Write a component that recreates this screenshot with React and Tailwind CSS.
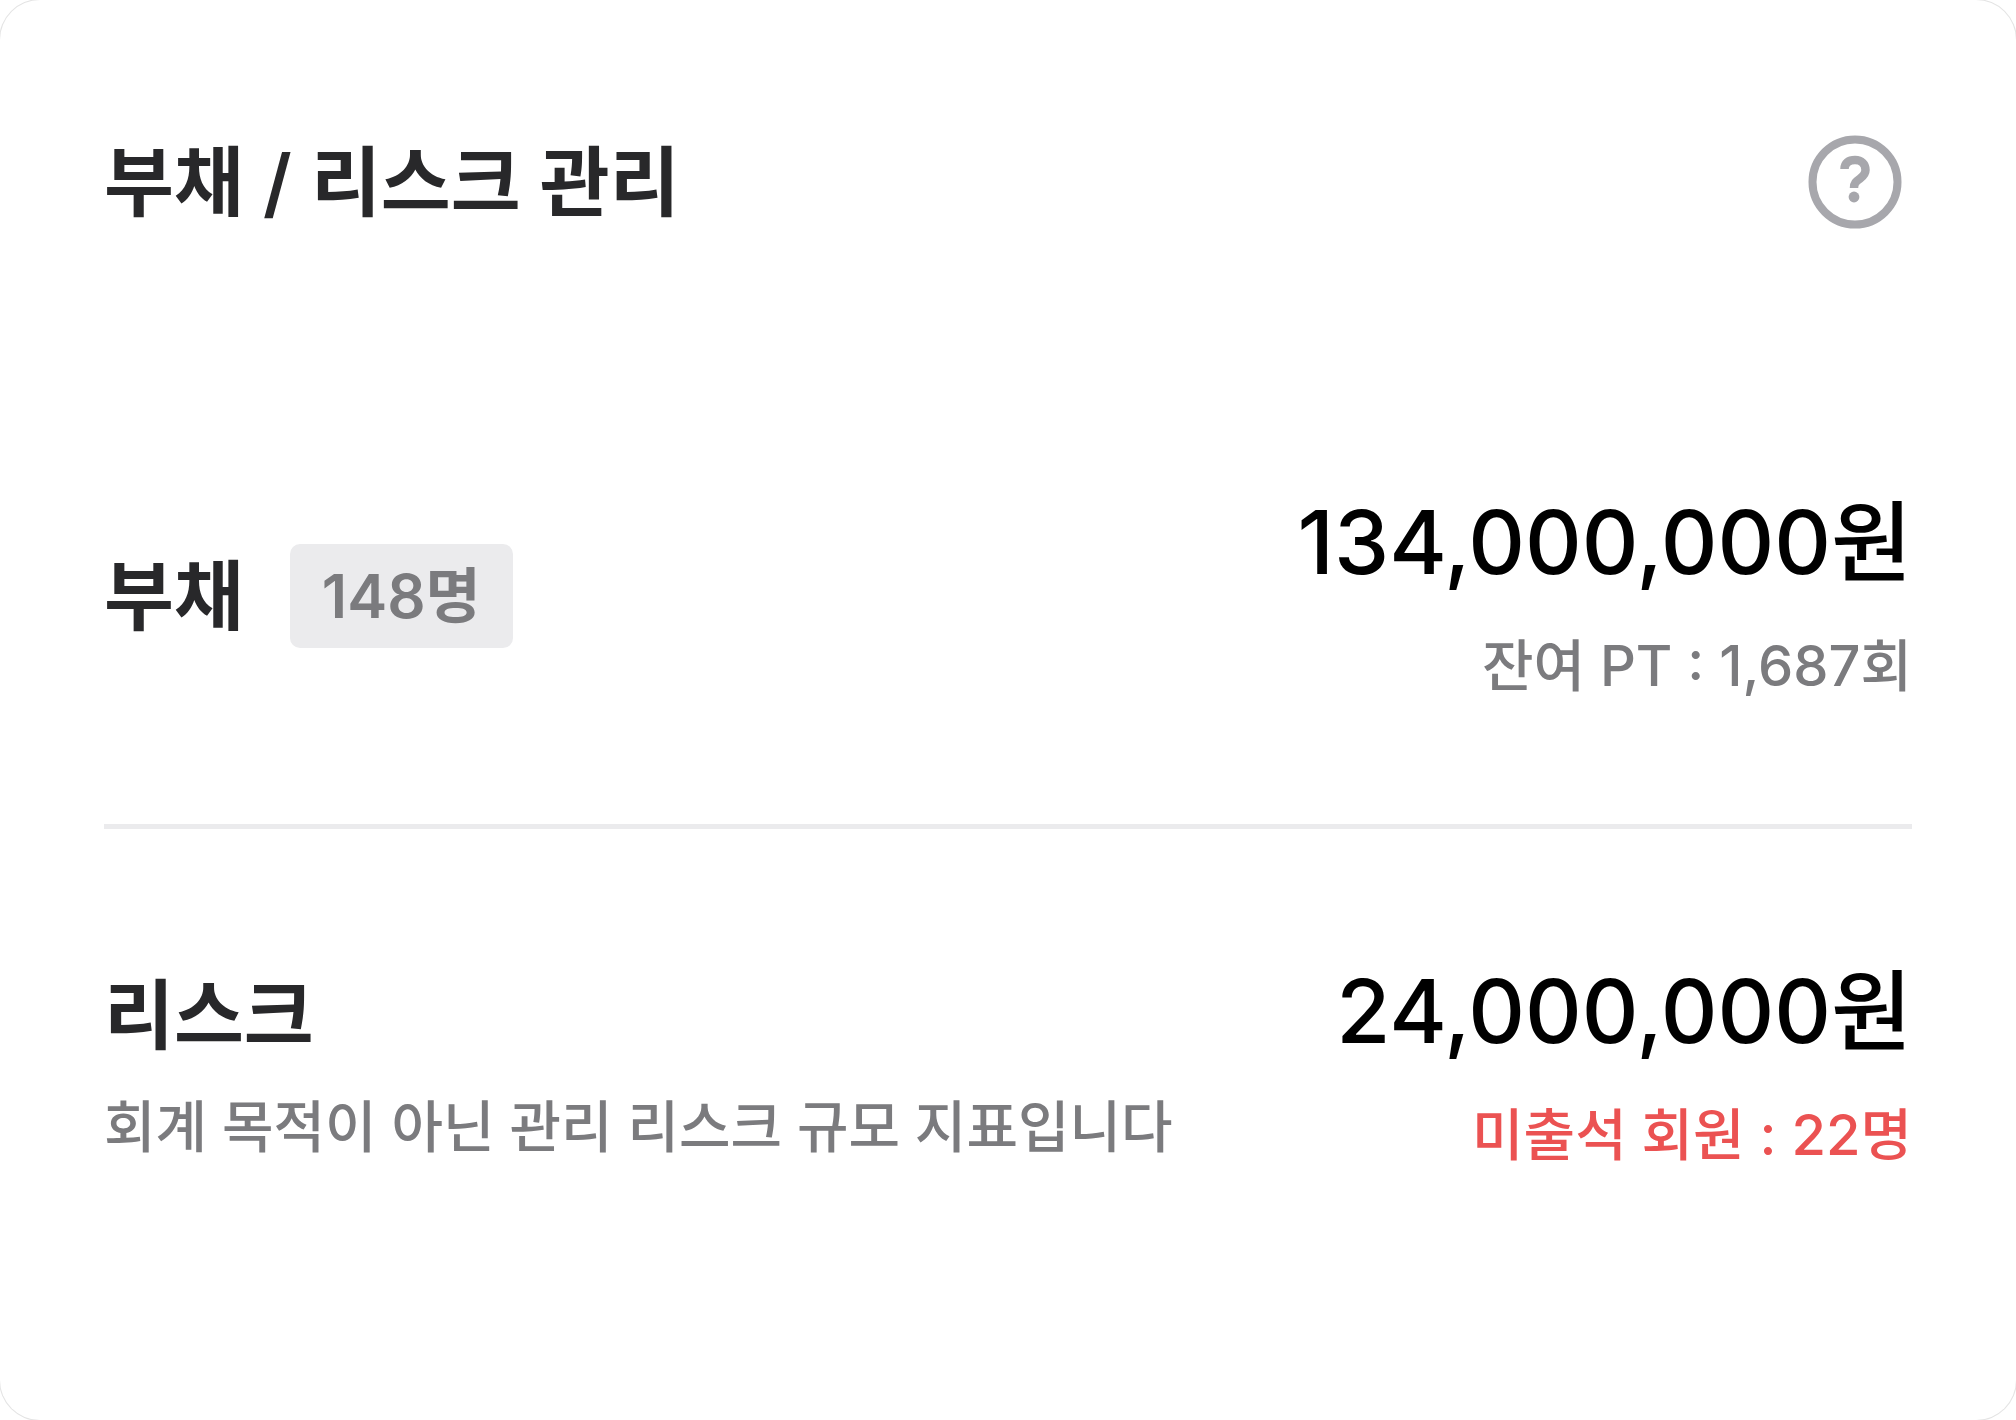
import React from 'react';

const rows = [
  {
    title: '부채',
    badge: '148명',
    amount: '134,000,000원',
    note: '잔여 PT : 1,687회',
    noteClass: 'text-[#7b7b7e]',
  },
  {
    title: '리스크',
    caption: '회계 목적이 아닌 관리 리스크 규모 지표입니다',
    amount: '24,000,000원',
    note: '미출석 회원 : 22명',
    noteClass: 'text-[#eb5252]',
  },
];

const HelpIcon = () => (
  <svg viewBox="0 0 94 94" className="h-[94px] w-[94px]" fill="none" stroke="#a7a7ac" aria-hidden="true">
    <circle cx="47" cy="47" r="42.5" strokeWidth="8" />
    <path d="M36.5 34C36.500 28 40.500 25 47 25S57.500 29 57.500 35C57.500 38.800 55.500 41 52 43.600C48 46.500 46 48 46 53" strokeWidth="8.500" />
    <circle cx="46" cy="62" r="5.400" fill="#a7a7ac" stroke="none" />
  </svg>
);

const RiskRow = ({ row }) => (
  <div className="flex items-center justify-between">
    <div className={row.caption ? 'pt-3' : ''}>
      <div className="flex items-center gap-[46px]">
        <h3 className="text-[76px] leading-[104px] font-semibold text-[#28282a]">{row.title}</h3>
        {row.badge && (
          <span className="rounded-[10px] bg-[#ebebed] px-8 text-[60px] leading-[104px] font-semibold text-[#7b7b7e]">
            {row.badge}
          </span>
        )}
      </div>
      {row.caption && (
        <p className="mt-2 text-[56px] leading-[104px] font-medium text-[#7b7b7e]">{row.caption}</p>
      )}
    </div>
    <div className="text-right">
      <p className="text-[88px] leading-[136px] font-medium text-black">{row.amount}</p>
      <p className={`mt-1 text-[56px] leading-[104px] font-medium ${row.noteClass}`}>{row.note}</p>
    </div>
  </div>
);

const App = () => (
  <div className="min-h-screen overflow-hidden bg-white">
    <section className="min-h-screen rounded-[40px] bg-white px-[104px] pt-[130px] font-[Inter,'Noto_Sans_CJK_KR',sans-serif] ring-1 ring-[#e4e4e4]">
      <header className="flex items-center justify-between">
        <h2 className="text-[76px] leading-[104px] font-semibold text-[#28282a]">부채 / 리스크 관리</h2>
        <button type="button" aria-label="도움말" className="mr-[10px]">
          <HelpIcon />
        </button>
      </header>
      <div className="pt-60">
        <RiskRow row={rows[0]} />
        <hr className="mt-[106px] mb-[114px] border-t-[5px] border-[#ebebed]" />
        <RiskRow row={rows[1]} />
      </div>
    </section>
  </div>
);

export default App;
